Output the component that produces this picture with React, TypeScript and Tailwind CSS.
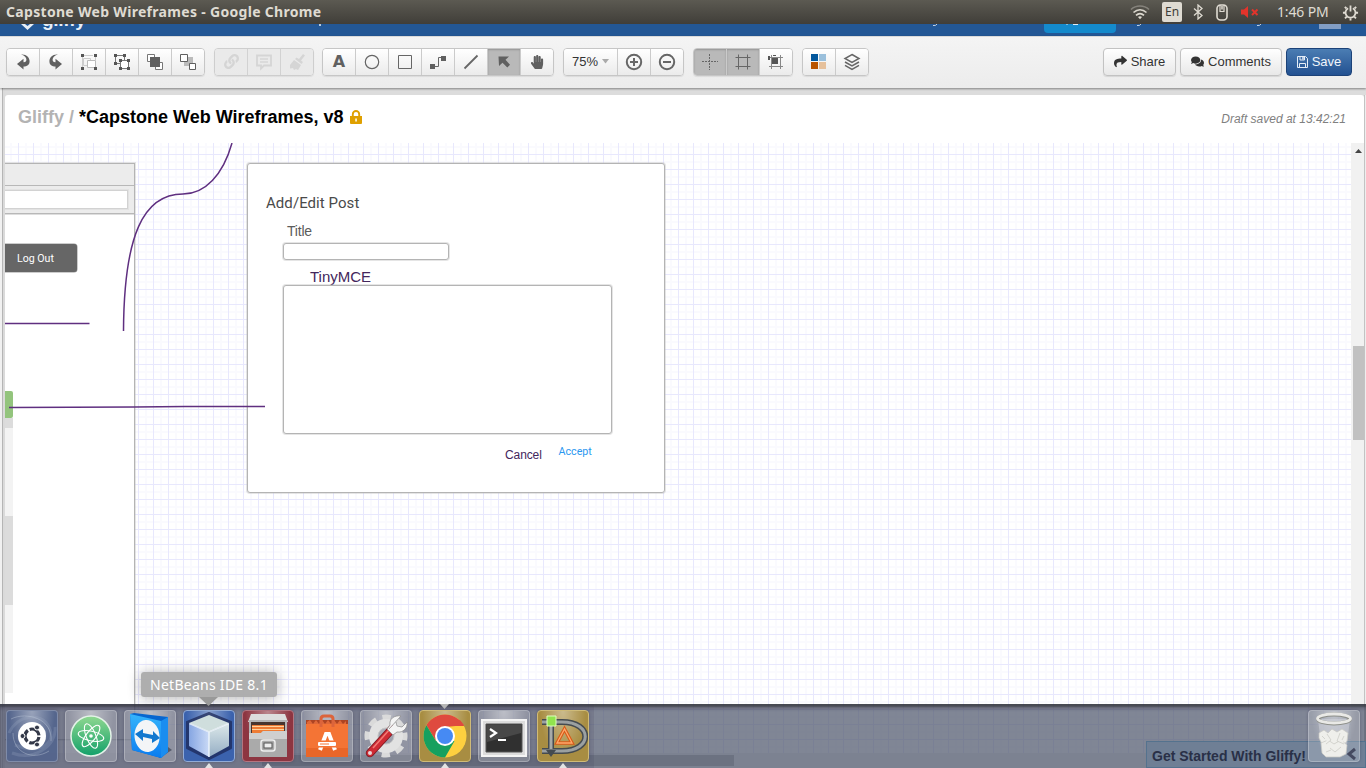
import type { ReactNode } from "react";
import { FaLink, FaComments, FaShare, FaRegSave, FaHandPaper } from "react-icons/fa";

type ToolState = "normal" | "disabled" | "active";

function Tool({ children, state = "normal", wide = false }: { children: ReactNode; state?: ToolState; wide?: boolean }) {
  const tone =
    state === "active"
      ? "bg-[#b9b9b9] shadow-[inset_0_1px_2px_rgba(0,0,0,0.2)]"
      : state === "disabled"
        ? "bg-[#e9e9e9]"
        : "bg-linear-to-b from-white to-[#ebebeb]";
  const size = wide ? "w-[54px]" : "w-[33px]";
  return (
    <div className={`flex h-[26px] items-center justify-center border-r border-[#cbcbcb] last:w-[32px] last:border-r-0 ${size} ${tone}`}>
      {children}
    </div>
  );
}

function Group({ children, className = "" }: { children: ReactNode; className?: string }) {
  return (
    <div className={`flex h-[28px] shrink-0 overflow-hidden rounded-[4px] border border-[#c6c6c6] shadow-[0_1px_1px_rgba(0,0,0,0.08)] ${className}`}>
      {children}
    </div>
  );
}

function Icon({ children, size = 18 }: { children: ReactNode; size?: number }) {
  return (
    <svg width={size} height={size} viewBox="0 0 18 18" fill="none" stroke="#666" strokeWidth="1">
      {children}
    </svg>
  );
}

const TurnArrow = ({ flip = false }: { flip?: boolean }) => (
  <Icon>
    <path
      transform={flip ? "translate(18 0) scale(-1 1)" : undefined}
      d="M7 1.500C12 .8 15.600 4 15.600 8.300C15.600 12 13 13.600 9.500 13.600V16.500L3 11L9.500 5.800V9.300C12.200 9.200 13 7.500 12 5C11 3 9.200 2.300 7 1.500z"
      fill="#606060"
      stroke="none"
    />
  </Icon>
);

function SystemBar() {
  return (
    <header className="flex h-[24px] shrink-0 items-center bg-linear-to-b from-[#5c5a52] to-[#403e39] pr-[7px] pl-[6px] font-['Noto_Sans','Open_Sans',sans-serif] text-[#dfdbd2]">
      <span className="text-[14px] leading-[24px] font-bold tracking-[0.31px] whitespace-nowrap">Capstone Web Wireframes - Google Chrome</span>
      <div className="ml-auto flex items-center">
        <svg width="20" height="16" viewBox="0 0 20 16" fill="none" strokeWidth="1.700">
          <path d="M1 5.500C6 .8 14 .8 19 5.500" stroke="#85827b" />
          <path d="M3.500 8.500c4-3.700 9-3.700 13 0" stroke="#d8d4cb" />
          <path d="M6 11.300c2.500-2.200 5.500-2.200 8 0" stroke="#dfdbd2" />
          <path d="M8 13l2 2.300L12 13c-1-1-3-1-4 0z" fill="#dfdbd2" stroke="none" />
        </svg>
        <span className="ml-[12px] flex h-[20px] w-[20px] items-center justify-center rounded-[2px] bg-[#dfdbd2] text-[12px] leading-none text-[#3f3d38]">En</span>
        <svg className="ml-[10px]" width="12" height="16" viewBox="0 0 12 16" fill="none" stroke="#dfdbd2" strokeWidth="1.300">
          <path d="M2 4.500l8 7L6 15V1l4 3.500-8 7" />
        </svg>
        <svg className="ml-[12px]" width="12" height="17" viewBox="0 0 12 17" fill="none" stroke="#dfdbd2">
          <rect x="1" y="1" width="10" height="15" rx="3.500" strokeWidth="1.600" />
          <path d="M4 1v6.500h4V1" strokeWidth="1.200" />
          <path d="M6 2v3.500" strokeWidth="1.500" />
        </svg>
        <svg className="ml-[13px]" width="18" height="14" viewBox="0 0 18 14" fill="#e3342b">
          <path d="M0 4.500h3l4-3.500v12l-4-3.500H0z" />
          <path d="M11 4.500l5.500 5.500M16.500 4.500L11 10" stroke="#e3342b" strokeWidth="2" />
        </svg>
        <span className="ml-[18px] w-[54px] text-[14px] leading-[24px] tracking-[-0.150px] whitespace-nowrap">1:46 PM</span>
        <svg className="ml-[11px]" width="17" height="17" viewBox="0 0 18 18" fill="none" stroke="#dfdbd2">
          <path d="M6.500 4.500a5.300 5.300 0 1 0 5 0M9 1.500V8" strokeWidth="1.900" />
          <path d="M3 3l1.800 1.800M15 3l-1.800 1.800M1 9.300h2.500M17 9.300h-2.500M3.200 15.200L5 13.400M14.800 15.200L13 13.400M9 17.500V15" strokeWidth="2" />
        </svg>
      </div>
    </header>
  );
}

function BrandStrip() {
  return (
    <div className="flex h-[12px] shrink-0 items-start overflow-hidden bg-[#235795]">
      <svg className="ml-[20px] shrink-0" width="14" height="7" viewBox="0 0 14 7">
        <path d="M1 0l6.500 6L14 0h-4L7.500 2 5 0z" fill="#e7eef6" />
      </svg>
      <span className="-mt-[14px] ml-[8px] w-[47px] font-['Liberation_Sans',sans-serif] text-[19px] leading-[20px] font-bold tracking-[-0.3px] text-[#e7eef6]">gliffy</span>
      <i className="ml-[230px] h-[2px] w-[2px] bg-[#b7cbe1]" />
      <svg className="ml-[612px] shrink-0" width="5" height="3"><path d="M0 1.500Q3 2 4 0" stroke="#c7d5e7" fill="none" /></svg>
      <div className="ml-[106px] flex h-[9px] w-[72px] shrink-0 justify-center rounded-b-[4px] bg-[#148acc]">
        <svg width="40" height="2"><path d="M7 0v1M13 .5h5" stroke="#dceefa" /></svg>
      </div>
      <svg className="ml-[21px] shrink-0" width="5" height="3"><path d="M0 1.500Q3 2 4 0" stroke="#c7d5e7" fill="none" /></svg>
      <svg className="ml-[115px] shrink-0" width="5" height="3"><path d="M0 1.500Q3 2 4 0" stroke="#c7d5e7" fill="none" /></svg>
      <div className="mr-[25px] ml-auto h-[5px] w-[22px] shrink-0 bg-[#829dc4]" />
    </div>
  );
}

function Toolbar() {
  return (
    <div className="relative flex h-[52px] shrink-0 items-center border-t border-[#dadada] bg-linear-to-b from-[#f4f4f4] to-[#ececec] pr-[14px] pb-[2px] pl-[6px] font-['Liberation_Sans',sans-serif] text-[13px] text-[#333] shadow-[0_1px_2px_rgba(0,0,0,0.4)]">
      <Group>
        <Tool><TurnArrow /></Tool>
        <Tool><TurnArrow flip /></Tool>
        <Tool>
          <Icon>
            <path d="M3.500 5.500h7v7h-7zM4 2.500h9M2.500 4v10M15.500 4v3" stroke="#cdcdcd" />
            <path d="M7.500 7.500h8v7h-8z" fill="#fff" stroke="#bbb" />
            <path d="M1 1h3v3H1zM14 1h3v3h-3zM1 14h3v3H1zM14 14h3v3h-3z" fill="#555" stroke="none" />
          </Icon>
        </Tool>
        <Tool>
          <Icon>
            <path d="M2.500 2.500h9v8h-9z" stroke="#777" />
            <path d="M7.500 7.500h8v8h-8z" stroke="#777" fill="#fff" />
            <path d="M1 1h3v3H1zM10 1h3v3h-3zM1 9h3v3H1zM6 6h3v3H6zM14 6h3v3h-3zM6 14h3v3H6zM14 14h3v3h-3z" fill="#555" stroke="none" />
          </Icon>
        </Tool>
        <Tool>
          <Icon>
            <path d="M1.500 1.500h7v7h-7zM9.500 9.500h7v7h-7z" fill="#fff" stroke="#777" />
            <path d="M4 4h10v10H4z" fill="#606060" stroke="none" />
          </Icon>
        </Tool>
        <Tool>
          <Icon>
            <path d="M5 4h9v9H5z" fill="#bbb" stroke="none" />
            <path d="M1.500 1.500h7v7h-7zM10.500 10.500h6v6h-6z" fill="#fff" stroke="#606060" />
          </Icon>
        </Tool>
      </Group>
      <Group className="ml-[9px] opacity-80">
        <Tool state="disabled"><FaLink size={15} color="#cfcfcf" /></Tool>
        <Tool state="disabled">
          <Icon>
            <path d="M2 2.500h14v10H9l-3 3v-3H2z" stroke="#cfcfcf" strokeWidth="1.800" />
            <path d="M5 6h8M5 9h8" stroke="#cfcfcf" strokeWidth="1.500" />
          </Icon>
        </Tool>
        <Tool state="disabled">
          <Icon>
            <path d="M15 1l2 1.500-4 5L15 9l-1.500 2L7 6l1.500-1.500L11 6zM6 7l7 5-3 5-2-1-2 1-1-2-3 .5L2 12z" fill="#cfcfcf" stroke="none" />
          </Icon>
        </Tool>
      </Group>
      <Group className="ml-[8px]">
        <Tool><span className="font-['DejaVu_Sans',sans-serif] text-[16px] leading-none font-bold text-[#606060]">A</span></Tool>
        <Tool><Icon><circle cx="9" cy="9" r="6.700" strokeWidth="1.200" /></Icon></Tool>
        <Tool><Icon><path d="M2.500 2.500h13v13h-13z" /></Icon></Tool>
        <Tool>
          <Icon>
            <path d="M5 13.500h4.500v-9H13" />
            <path d="M1 11h5v5H1zM12 3h5v5h-5z" fill="#606060" stroke="none" />
          </Icon>
        </Tool>
        <Tool><Icon><path d="M2.500 15.500l13-13" strokeWidth="1.800" /></Icon></Tool>
        <Tool state="active">
          <Icon><path d="M3.500 3.500h10.500l-3.500 3.200 4.500 5-2.700 2.800-4.800-4.800L4 13z" fill="#606060" stroke="none" /></Icon>
        </Tool>
        <Tool><FaHandPaper size={14} color="#606060" /></Tool>
      </Group>
      <Group className="ml-[9px]">
        <Tool wide>
          <span className="text-[13px]">75%</span>
          <svg className="ml-[4px]" width="7" height="5"><path d="M0 0h7L3.500 4.500z" fill="#aaa" /></svg>
        </Tool>
        <Tool><Icon><circle cx="9" cy="9" r="7.200" strokeWidth="2" /><path d="M9 5v8M5 9h8" strokeWidth="2" /></Icon></Tool>
        <Tool><Icon><circle cx="9" cy="9" r="7.200" strokeWidth="2" /><path d="M5 9h8" strokeWidth="2" /></Icon></Tool>
      </Group>
      <Group className="ml-[9px]">
        <Tool state="active"><Icon><path d="M8.500 1v16M1 8.500h16" strokeDasharray="2 1" /></Icon></Tool>
        <Tool state="active"><Icon><path d="M4.500 1.500v15M13.500 1.500v15M1.500 4.500h15M1.500 13.500h15" /></Icon></Tool>
        <Tool>
          <Icon>
            <path d="M4.500 2v14M13.500 2v14M2 4.500h14M2 13.500h14" stroke="#888" />
            <path d="M5 5h6v6H5zM1 3h2v4H1zM6 2h3v1H6z" fill="#555" stroke="none" />
          </Icon>
        </Tool>
      </Group>
      <Group className="ml-[9px]">
        <Tool>
          <Icon>
            <path d="M1 1h7v7H1z" fill="#01569c" stroke="none" />
            <path d="M9 1h7v7H9z" fill="#9bc0dc" stroke="none" />
            <path d="M1 9h7v7H1z" fill="#b85400" stroke="none" />
            <path d="M9 9h7v7H9z" fill="#e6c19c" stroke="none" />
          </Icon>
        </Tool>
        <Tool>
          <Icon><path d="M9 1.500l7 4-7 4-7-4zM2 9l7 4 7-4M2 12.300l7 4 7-4" strokeWidth="1.500" /></Icon>
        </Tool>
      </Group>
      <div className="ml-auto flex">
        <button className="flex h-[28px] w-[73px] items-center justify-center gap-[4px] rounded-[4px] border border-[#c2c2c2] bg-linear-to-b from-white to-[#e8e8e8] shadow-[0_1px_1px_rgba(0,0,0,0.1)]">
          <FaShare size={13} />Share
        </button>
        <button className="ml-[4px] flex h-[28px] w-[102px] items-center justify-center gap-[4px] rounded-[4px] border border-[#c2c2c2] bg-linear-to-b from-white to-[#e8e8e8] shadow-[0_1px_1px_rgba(0,0,0,0.1)]">
          <FaComments size={13} />Comments
        </button>
        <button className="ml-[4px] flex h-[28px] w-[66px] items-center justify-center gap-[4px] rounded-[4px] border border-[#1c4278] bg-linear-to-b from-[#4b7db3] to-[#235191] text-[#f0f5fb]">
          <svg width="11" height="12" viewBox="0 0 11 12" fill="none" stroke="#e6eef7">
            <path d="M.5.500h8l2 2v9H.5zM3 .5v3.500h4.500V.5M2.500 11.500v-4h6v4" />
            <path d="M6 1v2.500" strokeWidth="1.500" />
          </svg>
          Save
        </button>
      </div>
    </div>
  );
}

function Diagram() {
  return (
    <div className="relative flex-1 overflow-hidden bg-white">
      <svg className="absolute inset-0" width="1346" height="610">
        <defs>
          <pattern id="grid" width="15" height="15" patternUnits="userSpaceOnUse" x="13" y="11">
            <path d="M7 0h2v15H7zM0 7h15v2H0z" fill="#fafafe" />
            <path d="M0 0h1v15H0zM0 0h15v1H0z" fill="#e8e8fd" />
          </pattern>
        </defs>
        <rect width="1346" height="610" fill="url(#grid)" />
      </svg>

      <div className="absolute top-[20px] -left-[10px] h-[577px] w-[140px] border border-[#b4b4b4] bg-white shadow-[0_0_0_1px_rgba(190,190,190,0.4)]">
        <div className="h-[22px] border-b border-[#b8b8b8] bg-[#ececec]" />
        <div className="h-[28px] border-b border-[#b8b8b8] bg-[#ececec] pt-[4px] pr-[6px] shadow-[0_1px_0_#dedede]">
          <div className="h-[19px] border border-[#d2d2d2] bg-white shadow-[0_0_0_1px_#e2e2e2]" />
        </div>
      </div>
      <div className="absolute top-[101px] -left-[5px] flex h-[28px] w-[77px] items-center rounded-[3px] bg-[#666] pt-[1px] pl-[17px] font-[Roboto,sans-serif] text-[10.600px] text-white shadow-[0_0_0_0.500px_#999]">Log Out</div>
      <div className="absolute top-[248px] left-0 flex w-[8px] flex-col">
        <div className="h-[27px] rounded-r-[2px] bg-[#93c47d]" />
        <div className="h-[10px] bg-[#dcdcdc]" />
        <div className="h-[88px] bg-[#f3f3f3]" />
        <div className="h-[89px] bg-[#dcdcdc]" />
        <div className="h-[88px] bg-[#f3f3f3]" />
      </div>

      <div className="absolute top-[20px] left-[242px] h-[330px] w-[418px] rounded-[3px] border border-[#b4b4b4] bg-white shadow-[0_0_0_1px_rgba(190,190,190,0.4)]" />
      <span className="absolute top-[53px] left-[261px] font-[Roboto,sans-serif] text-[15px] leading-none tracking-[0.060px] whitespace-nowrap text-[#4a4a4a]">Add/Edit Post</span>
      <span className="absolute top-[81px] left-[282px] font-['Liberation_Sans',sans-serif] text-[14px] leading-none tracking-[-0.200px] text-[#5c5c5c]">Title</span>
      <div className="absolute top-[100px] left-[278px] h-[17px] w-[166px] rounded-[3px] border border-[#b4b4b4] bg-white shadow-[0_0_0_1px_rgba(190,190,190,0.4)]" />
      <span className="absolute top-[126px] left-[305px] font-['Liberation_Sans',sans-serif] text-[15px] leading-none text-[#43265c]">TinyMCE</span>
      <div className="absolute top-[142px] left-[278px] h-[149px] w-[329px] rounded-[3px] border border-[#b4b4b4] bg-white shadow-[0_0_0_1px_rgba(190,190,190,0.4)]" />
      <span className="absolute top-[306px] left-[500px] font-['Liberation_Sans',sans-serif] text-[12px] leading-none tracking-[-0.100px] text-[#43265c]">Cancel</span>
      <span className="absolute top-[304px] left-[553.500px] font-[Roboto,sans-serif] text-[10.700px] leading-none text-[#2b98f0]">Accept</span>

      <svg className="absolute inset-0" width="1346" height="610" fill="none" stroke="#5f2f80" strokeWidth="1.500">
        <path d="M227 0C218 32 200 51 178 51C138 51 119 93 118.500 188" />
        <path d="M0 180.500H84.500M4 264.500L130 264L180 263.500H260" />
      </svg>
    </div>
  );
}

function Workspace() {
  return (
    <main className="flex flex-1 flex-col overflow-hidden bg-[#dcdcdc] pt-[7px]">
      <div className="flex min-h-0 flex-1">
        <div className="-mt-[7px] w-[5px] shrink-0 border-r-2 border-l-2 border-r-[#dadada] border-l-[#f1f1f1] bg-[#b5b5b5]" />
        <section className="flex w-[1359px] flex-col rounded-t-[3px] bg-white">
          <div className="flex h-[48px] shrink-0 items-center pr-[18px] pl-[13px] font-['Liberation_Sans',sans-serif]">
            <h1 className="-mt-[4px] text-[18px] font-bold whitespace-nowrap text-black"><span className="text-[#b3b3b3]">Gliffy / </span>*Capstone Web Wireframes, v8</h1>
            <svg className="-mt-[4px] ml-[6px]" width="12" height="14" viewBox="0 0 12 14">
              <path d="M2.800 7V4.200a3.200 3.200 0 0 1 6.400 0V7" fill="none" stroke="#dfa000" strokeWidth="1.900" />
              <path d="M0 6h12v7a1 1 0 0 1-1 1H1a1 1 0 0 1-1-1z" fill="#dfa000" />
              <path d="M5.300 8.500h1.500v3H5.300z" fill="#fff" />
            </svg>
            <span className="ml-auto text-[12px] text-[#808080] italic">Draft saved at 13:42:21</span>
          </div>
          <div className="flex min-h-0 flex-1">
            <Diagram />
            <div className="flex w-[13px] shrink-0 flex-col items-end bg-[#f1f1f1]">
              <svg className="mt-[6px] mr-[2px]" width="7" height="5"><path d="M0 4h7L3.500 0z" fill="#444" /></svg>
              <div className="mt-[192px] h-[94px] w-[11px] bg-[#c1c1c1]" />
            </div>
          </div>
          <div className="flex h-[15px] shrink-0 items-center bg-[#eee]">
            <div className="ml-[257px] h-[11px] w-[472px] bg-[#b0b0b0]" />
          </div>
        </section>
        <div className="w-[2px] border-l border-[#c3c3c3] bg-[#eee]" />
      </div>
    </main>
  );
}

function Tile({ children, tone = "bg-white/20 border-white/25", mark = false }: { children: ReactNode; tone?: string; mark?: boolean }) {
  return (
    <div className={`relative flex h-[52px] w-[52px] shrink-0 items-center justify-center rounded-[4px] border shadow-[0_0_3px_rgba(50,50,80,0.4)] ${tone}`}>
      <div className="absolute inset-0 rounded-[3px] bg-radial-[at_50%_0%] from-white/40 to-transparent to-65%" />
      <svg className="relative shrink-0" width="50" height="50" viewBox="0 0 50 50" fill="none">{children}</svg>
      {mark && <svg className="absolute top-[52px] left-[21px]" width="8" height="5"><path d="M0 5l4-5 4 5z" fill="#e3e3e3" /></svg>}
    </div>
  );
}

function Dock() {
  return (
    <footer className="absolute bottom-0 left-0 flex h-[64px] w-[1366px] gap-[7px] bg-[#555e72]/75 px-[6px] pt-[6px] shadow-[inset_0_3px_2px_rgba(35,38,40,0.55),inset_0_6px_2px_rgba(70,65,90,0.25)]">
      <div className="absolute inset-y-0 left-0 w-[594px] bg-[#3a3555]/15" />
      <div className="absolute top-[37px] left-[1146px] h-[27px] w-[220px] border border-[#54728e] bg-[#6f7f95] pl-[5px] font-['Liberation_Sans',sans-serif] text-[14px] leading-[28px] font-bold whitespace-nowrap text-[#293047]">
        Get Started With Gliffy!
      </div>
      <Tile tone="bg-[#52648d]/90 border-white/25">
        <path d="M2 22C10 4 34 0 42 16S34 44 8 34M48 16C50 36 26 50 5 42" stroke="#a9b6ce" strokeWidth="3" opacity=".22" />
        <path d="M4 8C20 0 46 8 44 30M6 22C6 42 26 50 42 40" stroke="#c3cddd" strokeWidth="1" opacity=".4" />
        <circle cx="25" cy="25" r="14" fill="#fff" />
        <circle cx="25" cy="25" r="7" stroke="#333848" strokeWidth="3.200" strokeDasharray="12.700 2" strokeDashoffset="-1" />
        <circle cx="15.500" cy="25" r="2.500" fill="#333848" stroke="#fff" />
        <circle cx="30" cy="16.500" r="2.500" fill="#333848" stroke="#fff" />
        <circle cx="30" cy="33.500" r="2.500" fill="#333848" stroke="#fff" />
      </Tile>
      <Tile>
        <defs><linearGradient id="atom" x2="0" y2="1"><stop stopColor="#8fd890" /><stop offset="1" stopColor="#12a06a" /></linearGradient></defs>
        <circle cx="25" cy="25" r="20" fill="url(#atom)" stroke="#e4f3e8" strokeWidth="1.500" />
        <g stroke="#fff" strokeWidth="1.100">
          <ellipse cx="25" cy="25" rx="13" ry="4.800" transform="rotate(12 25 25)" />
          <ellipse cx="25" cy="25" rx="13" ry="4.800" transform="rotate(68 25 25)" />
          <ellipse cx="25" cy="25" rx="13" ry="4.800" transform="rotate(128 25 25)" />
        </g>
        <circle cx="25" cy="25" r="1.800" fill="#fff" />
      </Tile>
      <Tile>
        <defs><linearGradient id="viewer" x2="0" y2="1"><stop stopColor="#35b4fb" /><stop offset="1" stopColor="#0a7cf0" /></linearGradient></defs>
        <path d="M34 47l13-8-4-3-8 5z" fill="#3c4354" opacity=".7" />
        <path d="M5 3l4-1 34 4v35l-7 6L7 39z" fill="#0766cf" />
        <path d="M36 10l7-4v35l-7 6z" fill="#1a8df0" />
        <path d="M5 3l31 7v37L7 39z" fill="url(#viewer)" />
        <ellipse cx="22" cy="25" rx="12.500" ry="16" fill="#f3f5f7" transform="rotate(-6 22 25)" />
        <path d="M10 23l8-5v4l10 2v-4l7 7-8 5v-4l-9-2v4z" fill="#1278cf" />
      </Tile>
      <Tile tone="bg-[#3b62ad] border-[#91abd6]" mark>
        <defs>
          <linearGradient id="cubeLeft" x2="1" y2="0"><stop stopColor="#86a6e2" /><stop offset="1" stopColor="#c9d9f6" /></linearGradient>
          <linearGradient id="cubeRight" x2="0" y2="1"><stop stopColor="#dde9ea" /><stop offset="1" stopColor="#94adc4" /></linearGradient>
        </defs>
        <path d="M25 2L3 11v26l22 11 22-11V11z" fill="#1a2452" stroke="#1a2452" strokeWidth="2" strokeLinejoin="round" opacity=".7" />
        <path d="M25 4l20 8-20 9L5 12z" fill="#cfdedd" />
        <path d="M5 12l20 9v25L5 35z" fill="url(#cubeLeft)" />
        <path d="M45 12l-20 9v25l20-11z" fill="url(#cubeRight)" />
        <path d="M5.500 12.500L25 21l19.500-8.500M25 21v25" stroke="#f1f8fc" strokeWidth="1.600" opacity=".8" />
      </Tile>
      <Tile tone="bg-[#8d3541] border-[#b37580]" mark>
        <path d="M8 3h34l3 8H5z" fill="#ddd" />
        <path d="M6 9h38v37H6z" fill="#b5b5b5" />
        <path d="M8 11h34v12H8z" fill="#48352e" />
        <path d="M9 14h32v8H9z" fill="#ee7c35" />
        <path d="M9 15.500h32M9 18.500h32" stroke="#ffd29c" />
        <path d="M6 22h12l2-2h24v26H6z" fill="#aaa" />
        <path d="M6 22h12l2-2h24v8H6z" fill="#cfcfcf" />
        <rect x="18" y="29" width="14" height="11" rx="2.500" fill="#aaa" stroke="#eee" strokeWidth="1.500" />
        <rect x="21" y="32" width="8" height="5" fill="#eee" stroke="#555" />
      </Tile>
      <Tile>
        <path d="M4 9h42v6H4z" fill="#ad4423" />
        <path d="M5 11l3-2 3 4 3-4 3 4 3-4 3 4 3-4 3 4 3-4 3 4 3-4 3 4 3-3v4H5z" fill="#df6838" />
        <path d="M4 13h42v33H4z" fill="#f47435" />
        <path d="M4 37h42v9H4z" fill="#e96628" />
        <path d="M19 16V8q0-3 3-3h6q3 0 3 3v8" stroke="#dc643b" strokeWidth="3" />
        <path d="M18 39l6-16h3l6 16" stroke="#fff" strokeWidth="4" />
        <path d="M14 33h22" stroke="#f47435" strokeWidth="7" />
        <rect x="16" y="31" width="18" height="4" rx="1" fill="#fff" />
        <path d="M18 33h9" stroke="#f47435" />
      </Tile>
      <Tile>
        <circle cx="25" cy="25" r="18" stroke="#dadada" strokeWidth="7" strokeDasharray="8 6.137" strokeDashoffset="4" />
        <circle cx="25" cy="25" r="12.500" stroke="#e2e2e2" strokeWidth="9" />
        <circle cx="25" cy="25" r="8" stroke="#c4c4c4" strokeWidth="1" />
        <path d="M9 42l22-24" stroke="#801c25" strokeWidth="8.500" strokeLinecap="round" />
        <path d="M9 42l22-24" stroke="#cf2b34" strokeWidth="6.500" strokeLinecap="round" />
        <path d="M12 37l17-19" stroke="#f37a74" strokeWidth="1.500" />
        <circle cx="9" cy="42" r="2" fill="#e9d7d7" />
        <path d="M28 18L40 5c-7-1-12 3-11 9l-3 4 6 6 4-3c6 1 11-4 10-10l-5 5-5-1-1-4" fill="#f4f4f4" stroke="#888" strokeWidth=".7" />
      </Tile>
      <Tile tone="bg-[#a88d42] border-[#cfbb78]" mark>
        <circle cx="25" cy="25" r="21.500" fill="#fed03f" />
        <path d="M6.400 14.250A21.500 21.500 0 0 1 43.600 14.250L25 16 16 30z" fill="#df4a3f" />
        <path d="M25 15h19l-.5-1.500L40 9z" fill="#df4a3f" />
        <path d="M6.400 14.250A21.500 21.500 0 0 0 25 46.500L34.500 30 16 30z" fill="#16a05f" />
        <circle cx="25" cy="25" r="10" fill="#fff" />
        <circle cx="25" cy="25" r="8" fill="#468af3" />
      </Tile>
      <Tile>
        <path d="M3 9h44v36H3z" fill="#dcdcdc" stroke="#f4f4f4" strokeWidth="2" />
        <path d="M7 13h36v28H7z" fill="#303030" stroke="#555" />
        <path d="M8 14h34v8L8 31z" fill="#484848" />
        <path d="M11 18l6 4-6 4" stroke="#fff" strokeWidth="2.200" />
        <path d="M19 29h8" stroke="#fff" strokeWidth="2" />
      </Tile>
      <Tile tone="bg-[#a88d42] border-[#cfbb78]" mark>
        <path d="M4 11h20c31 0 31 29 0 29H4" stroke="#454b50" strokeWidth="6" />
        <path d="M4 11h20c31 0 31 29 0 29H4" stroke="#9ba0a1" strokeWidth="3" />
        <path d="M13 11v27" stroke="#454b50" strokeWidth="6" />
        <path d="M13 11v27" stroke="#a7aaa9" strokeWidth="3" />
        <path d="M8 39h10l-5 7z" fill="#454b50" />
        <path d="M9 5h9v10H9z" fill="#91e44e" stroke="#dfffbf" />
        <path d="M26.500 18L19 32h15z" stroke="#d95a18" strokeWidth="3.500" />
        <path d="M26.500 18L19 32h15z" stroke="#ffa96b" strokeWidth="1.300" />
      </Tile>
      <div className="ml-auto">
        <Tile>
          <path d="M46 38l-6 5 6 5" stroke="#454a60" strokeWidth="3" />
          <path d="M9 8l4 34c1 5 23 5 24 0l4-34z" fill="#d5d8df" opacity=".5" />
          <g fill="#efefeb" stroke="#c7c7c1" strokeWidth=".7">
            <path d="M10 22l5-3 4 3 4-4 5 3 5-3 6 4-1 8-4 5-8-2-5 3-8-3-3-6z" />
            <path d="M12 32l7-3 6 4 7-4 6 5-1 9-6 3H17l-4-4z" />
            <path d="M18 23l4 6-5 4M31 22l-3 8 7 3M21 37l5 4 6-5M17 41l5-2M13 25l3 3M35 25l-2 4" />
          </g>
          <ellipse cx="25" cy="8" rx="16" ry="4.500" stroke="#8c8e88" strokeWidth="4" />
          <ellipse cx="25" cy="7.500" rx="16.500" ry="4.500" stroke="#e9e9e6" strokeWidth="2.800" />
        </Tile>
      </div>
      <svg className="absolute top-0 left-[440px]" width="9" height="5"><path d="M0 0h9L4.500 5z" fill="#b7b7b7" /></svg>
    </footer>
  );
}

export default function App() {
  return (
    <div className="relative flex h-[768px] w-[1366px] flex-col overflow-hidden bg-white">
      <SystemBar />
      <BrandStrip />
      <Toolbar />
      <Workspace />
      <Dock />
      <div className="absolute top-[672px] left-[141px] h-[25px] w-[136px] rounded-[3px] bg-[#aaa]/95 pl-[9px] font-['Noto_Sans','Open_Sans',sans-serif] text-[14px] leading-[25px] tracking-[0.270px] whitespace-nowrap text-white shadow-[0_1px_14px_rgba(0,0,0,0.3)]">
        NetBeans IDE 8.1
        <svg className="absolute top-[25px] left-[58px]" width="19" height="9"><path d="M0 0h19L9.500 9z" fill="#999" /></svg>
      </div>
    </div>
  );
}
